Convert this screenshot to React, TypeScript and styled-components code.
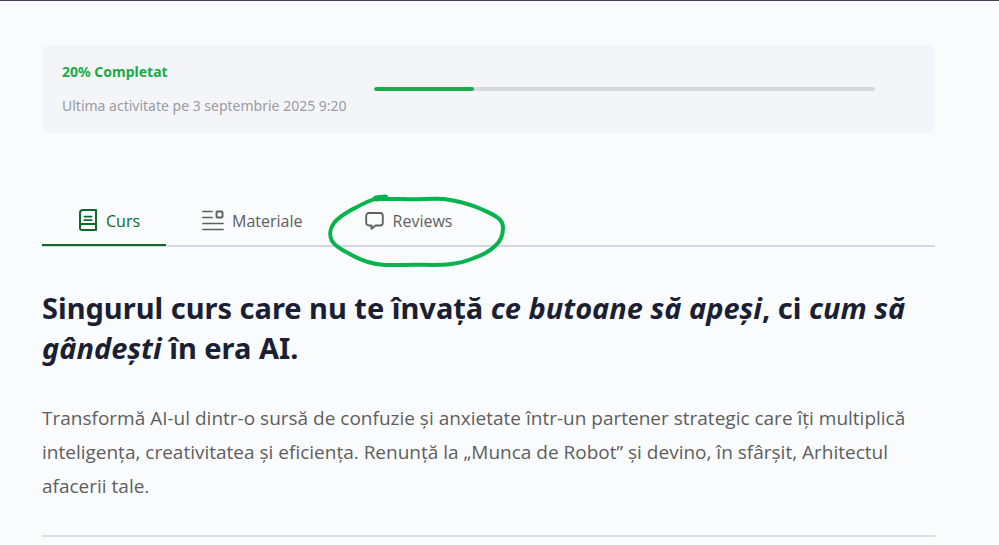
import React, { useState } from "react";
import styled, { createGlobalStyle } from "styled-components";

const GlobalStyle = createGlobalStyle`
  *, *::before, *::after { box-sizing: border-box; }
  body {
    margin: 0;
    background: #fafbfd;
    color: #5e5e5e;
    font-family: "Open Sans", "Noto Sans", sans-serif;
  }
`;

const Page = styled.main`
  border-top: 1px solid #3f4254;
  padding: 44px 64px 0 42px;
`;

const ProgressCard = styled.section`
  display: flex;
  align-items: center;
  gap: 24px;
  min-height: 88px;
  padding: 16px 60px 16px 20px;
  border-radius: 8px;
  background: #f4f5f9;
`;

const ProgressInfo = styled.div`
  flex: 0 0 288px;
  display: flex;
  flex-direction: column;
  gap: 12px;
  white-space: nowrap;
  font-family: "Noto Sans", "Open Sans", sans-serif;
`;

const ProgressTitle = styled.label`
  font-size: 14px;
  line-height: 22px;
  font-weight: 700;
  color: #19ac46;
`;

const ProgressNote = styled.span`
  font-size: 14px;
  line-height: 22px;
  color: #9b9b9f;
`;

const ProgressBar = styled.progress`
  appearance: none;
  flex: 1;
  min-width: 0;
  height: 4px;
  border: 0;
  border-radius: 2px;
  overflow: hidden;
  background: #d8d9dd;

  &::-webkit-progress-bar {
    background: #d8d9dd;
    border-radius: 2px;
  }
  &::-webkit-progress-value {
    background: #19ac46;
    border-radius: 2px;
  }
`;

const TabList = styled.div`
  display: flex;
  margin-top: 65px;
  border-bottom: 2px solid #d6d6de;
`;

const Tab = styled.button<{ $active: boolean }>`
  position: relative;
  display: flex;
  align-items: center;
  gap: 8px;
  height: 48px;
  margin-bottom: -1px;
  padding: 0 26px 0 36px;
  border: 0;
  border-bottom: 2px solid ${(p) => (p.$active ? "#10662b" : "transparent")};
  background: none;
  color: ${(p) => (p.$active ? "#10662b" : "#5e5e5e")};
  font-family: inherit;
  font-size: 16px;
  line-height: 24px;
  cursor: pointer;
`;

const TabIcon = styled.svg`
  flex: none;
  height: 24px;
  fill: none;
  stroke: currentColor;
  stroke-width: 2;
  stroke-linecap: round;
  stroke-linejoin: round;
`;

const Marker = styled.svg`
  position: absolute;
  left: -4px;
  top: -7px;
  width: 184px;
  height: 80px;
  fill: none;
  stroke: #06b34c;
  stroke-width: 4;
  stroke-linecap: round;
  stroke-linejoin: round;
  pointer-events: none;
`;

const Headline = styled.h1`
  margin: 41px 0 0;
  font-family: "Noto Sans", "Open Sans", sans-serif;
  font-size: 29px;
  line-height: 40px;
  font-weight: 700;
  color: #1b1f33;
`;

const Intro = styled.p`
  margin: 33px 0 0;
  font-size: 19px;
  line-height: 34px;
`;

const Divider = styled.hr`
  margin: 32px 0 0;
  border: 0;
  border-top: 2px solid #dedee0;
`;

const BookIcon = () => (
  <TabIcon width="20" viewBox="0 0 20 24" aria-hidden="true">
    <path d="M5 1H18V21H4A2 2 0 0 1 2 19V4A3 3 0 0 1 5 1Z" />
    <path d="M2 17A2 2 0 0 1 4 15H18" />
    <path d="M6.500 7.600H13.500M6.500 11.200H13.500" strokeWidth="1.800" />
  </TabIcon>
);

const ListIcon = () => (
  <TabIcon width="22" viewBox="0 0 22 24" aria-hidden="true">
    <path d="M1 2.500H10M1 8.500H10M1 14.500H21M1 20.500H21" strokeWidth="1.700" />
    <rect x="14.500" y="2.500" width="6" height="6" rx="1" strokeWidth="1.900" />
  </TabIcon>
);

const BubbleIcon = () => (
  <TabIcon width="20" viewBox="0 0 20 24" aria-hidden="true">
    <path
      d="M4 4H15A2.800 2.800 0 0 1 17.800 6.800V13.700A2.800 2.800 0 0 1 15 16.500H10.500L6.500 19.800V16.500H4A2.800 2.800 0 0 1 1.200 13.700V6.800A2.800 2.800 0 0 1 4 4Z"
      strokeWidth="1.800"
    />
  </TabIcon>
);

const HandCircle = () => (
  <Marker viewBox="324 191 184 80" aria-hidden="true">
    <path d="M385 197C380 197 375 198 371 200C363 203 356 207 350 210C343 214 337 218 333 223C329 228 328 235 331 241C334 246 341 250 347 253C354 257 360 260 367 262C373 264 379 265 385 265H403C418 264 435 266 450 264C459 263 466 261 473 258C482 255 489 251 494 246C500 241 502 236 502 228C502 224 500 220 497 218C492 214 486 212 480 209C469 204 457 201 443 199C430 198 417 200 403 199H374" />
    <path d="M375 198.500L384 197.500" strokeWidth="6" />
  </Marker>
);

const tabs = [
  { id: "curs", label: "Curs", Icon: BookIcon, marked: false },
  { id: "materiale", label: "Materiale", Icon: ListIcon, marked: false },
  { id: "reviews", label: "Reviews", Icon: BubbleIcon, marked: true },
];

export default function App() {
  const [active, setActive] = useState("curs");

  return (
    <>
      <GlobalStyle />
      <Page>
        <ProgressCard>
          <ProgressInfo>
            <ProgressTitle htmlFor="course-progress">20% Completat</ProgressTitle>
            <ProgressNote>Ultima activitate pe 3 septembrie 2025 9:20</ProgressNote>
          </ProgressInfo>
          <ProgressBar id="course-progress" max={100} value={20} />
        </ProgressCard>

        <TabList role="tablist">
          {tabs.map(({ id, label, Icon, marked }) => (
            <Tab
              key={id}
              type="button"
              role="tab"
              aria-selected={active === id}
              $active={active === id}
              onClick={() => setActive(id)}
            >
              <Icon />
              {label}
              {marked && <HandCircle />}
            </Tab>
          ))}
        </TabList>

        <Headline>
          Singurul curs care nu te învață <em>ce butoane să apeși</em>, ci <em>cum să gândești</em> în era AI.
        </Headline>
        <Intro>
          Transformă AI-ul dintr-o sursă de confuzie și anxietate într-un partener strategic care îți multiplică
          inteligența, creativitatea și eficiența. Renunță la „Munca de Robot” și devino, în sfârșit, Arhitectul
          afacerii tale.
        </Intro>
        <Divider />
      </Page>
    </>
  );
}
